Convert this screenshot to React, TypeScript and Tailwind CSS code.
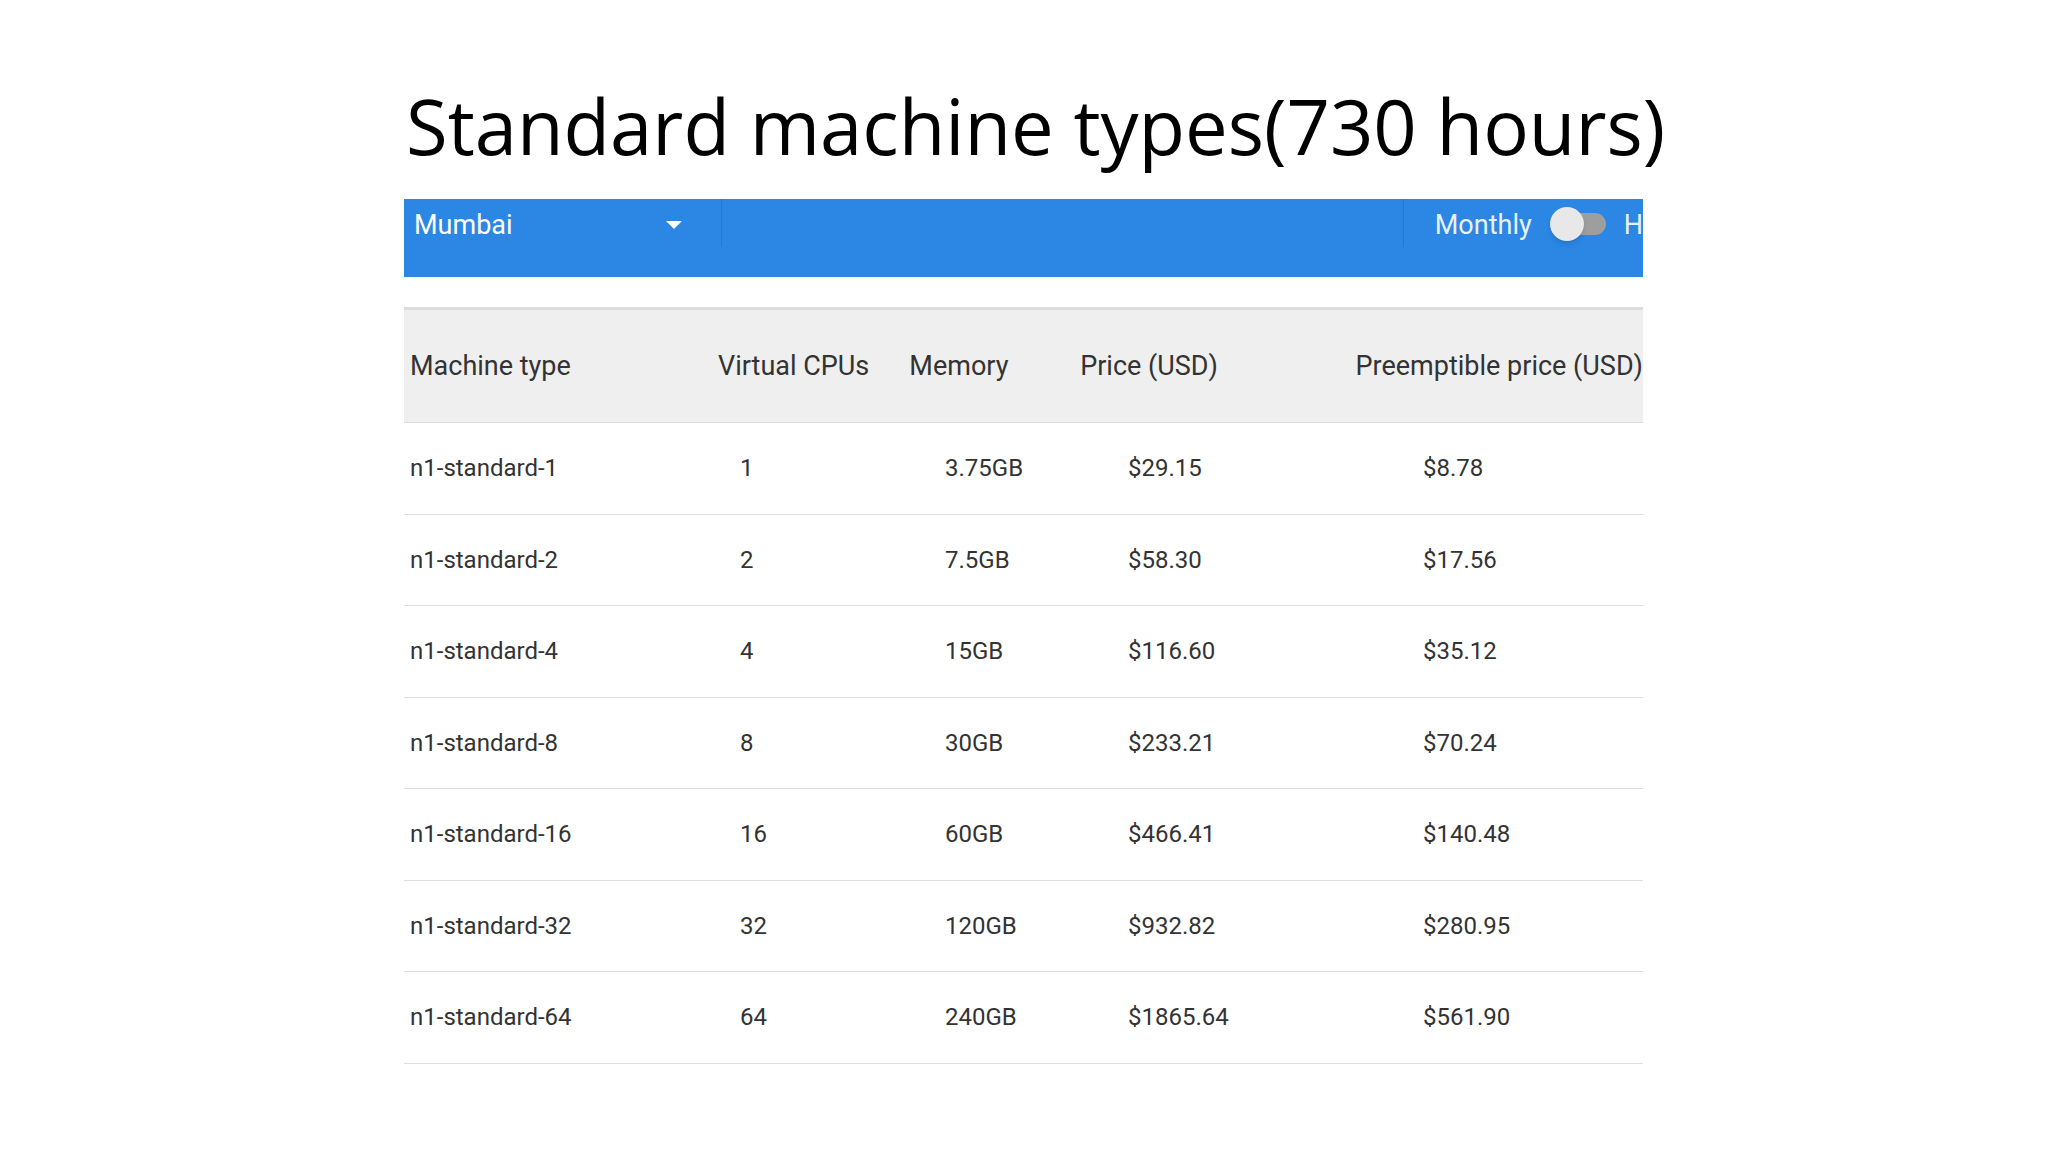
const rows = [
  ["n1-standard-1", "1", "3.75GB", "$29.15", "$8.78"],
  ["n1-standard-2", "2", "7.5GB", "$58.30", "$17.56"],
  ["n1-standard-4", "4", "15GB", "$116.60", "$35.12"],
  ["n1-standard-8", "8", "30GB", "$233.21", "$70.24"],
  ["n1-standard-16", "16", "60GB", "$466.41", "$140.48"],
  ["n1-standard-32", "32", "120GB", "$932.82", "$280.95"],
  ["n1-standard-64", "64", "240GB", "$1865.64", "$561.90"],
];

const cols = ["w-[336px]", "w-[205px]", "w-[183px]", "w-[295px]", "flex-1"];

export default function App() {
  return (
    <div className="w-[2048px] h-[1152px] bg-white overflow-hidden">
      <h1 className="pl-[406px] pt-[70px] h-[199px] text-[76px] leading-[112px] text-black" style={{ fontFamily: "'Open Sans', sans-serif" }}>
        Standard machine types(730 hours)
      </h1>
      <div className="ml-[404px] w-[1239px] overflow-hidden" style={{ fontFamily: "Roboto, sans-serif" }}>
        <div className="h-[78px] bg-[#2b87e3] flex text-white text-[27px]">
          <div className="w-[321px] flex items-start pt-[6px] pl-[10px] relative">
            <span>Mumbai</span>
            <span className="absolute left-[262px] top-[22px] w-0 h-0 border-l-[8px] border-r-[8px] border-t-[8px] border-l-transparent border-r-transparent border-t-white" />
          </div>
          <div className="w-[692px] border-l border-[#2079d3] h-[48px]" />
          <div className="flex-1 border-l border-[#2079d3] h-[48px] flex items-start pt-[6px] pl-[31px] gap-[18px] whitespace-nowrap">
            <span className="text-[#e8f1fb]">Monthly</span>
            <span className="relative w-[56px] h-[26px] mt-[5px]">
              <span className="absolute left-[10px] top-[3px] w-[46px] h-[22px] rounded-full bg-[#9e9e9e]" />
              <span className="absolute left-0 top-[-3px] w-[34px] h-[34px] rounded-full bg-[#e8e8e8] shadow-md" />
            </span>
            <span className="text-[#e8f1fb]">H</span>
          </div>
        </div>
        <div className="mt-[30px] border-t-[3px] border-[#dcdcdc] bg-[#efefef] h-[116px] flex items-center text-[27px] text-[#333] border-b border-b-[#dedede] whitespace-nowrap">
          {["Machine type", "Virtual CPUs", "Memory", "Price (USD)", "Preemptible price (USD)"].map((h, i) => (
            <div key={h} className={`${cols[i]} ${i === 0 ? "pl-[6px]" : ""}`}>{h}</div>
          ))}
        </div>
        {rows.map((r) => (
          <div key={r[0]} className="h-[91.5px] flex items-center text-[24px] text-[#333] border-b border-[#dedede]">
            {r.map((c, i) => (
              <div key={i} className={`${cols[i]} ${i === 0 ? "pl-[6px]" : ""}`}>{c}</div>
            ))}
          </div>
        ))}
      </div>
    </div>
  );
}
